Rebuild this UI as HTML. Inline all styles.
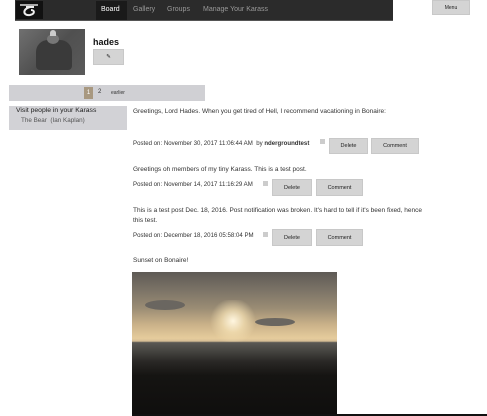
<!DOCTYPE html>
<html><head><style>
body{margin:0;width:487px;height:416px;overflow:hidden;background:#fff;font-family:"Liberation Sans",sans-serif;font-size:6.5px;color:#333;position:relative}
.a{position:absolute;white-space:nowrap}
.btn{position:absolute;background:#d4d4d4;border:1px solid #c8c8c8;text-align:center;font-size:5.5px;color:#222;box-sizing:border-box}
</style></head><body>
<div class="a" style="left:15px;top:0;width:378px;height:20px;background:#2b2b2b;border-bottom:1px solid #555"></div>
<div class="a" style="left:16px;top:1px;width:27px;height:18px;background:#111"></div>
<svg class="a" style="left:18px;top:2px" width="24" height="16"><path d="M2 3 L20 3" stroke="#ddd" stroke-width="1.5"/><path d="M8 5 L16 5 M12 5 C4 7 5 14 12 13 C17 12 17 8 13 8" stroke="#eee" stroke-width="2" fill="none"/></svg>
<div class="a" style="left:96px;top:1px;width:31px;height:19px;background:#1a1a1a"></div>
<div class="a" style="left:101px;top:6px;color:#fff;font-size:7px">Board</div>
<div class="a" style="left:133px;top:6px;color:#999;font-size:7px">Gallery</div>
<div class="a" style="left:167px;top:6px;color:#999;font-size:7px">Groups</div>
<div class="a" style="left:203px;top:6px;color:#999;font-size:7px">Manage Your Karass</div>
<div class="btn" style="left:432px;top:0;width:38px;height:15px;line-height:14px;font-size:5px">Menu</div>
<div class="a" style="left:19px;top:29px;width:66px;height:46px;background:linear-gradient(135deg,#707070,#505050 50%,#5a5a5a)"></div>
<div class="a" style="left:36px;top:40px;width:36px;height:30px;background:#3a3a3a;border-radius:12px 12px 4px 4px"></div>
<div class="a" style="left:47px;top:34px;width:12px;height:10px;background:#777;border-radius:50%"></div>
<div class="a" style="left:50px;top:30px;width:6px;height:6px;background:#ccc;border-radius:50% 50% 0 0"></div>
<div class="a" style="left:93px;top:37px;font-weight:bold;font-size:9px;color:#111">hades</div>
<div class="btn" style="left:93px;top:49px;width:31px;height:16px;line-height:14px">✎</div>
<div class="a" style="left:9px;top:85px;width:196px;height:16px;background:#d0d0d4"></div>
<div class="a" style="left:84px;top:87px;width:9px;height:12px;background:#a89880;color:#fff;font-size:6px;text-align:center;line-height:12px">1</div>
<div class="a" style="left:98px;top:89px;font-size:6px">2</div>
<div class="a" style="left:111px;top:90px;font-size:5px">earlier</div>
<div class="a" style="left:9px;top:106px;width:118px;height:24px;background:#d2d2d6"></div>
<div class="a" style="left:16px;top:107px;font-size:6.8px;color:#222">Visit people in your Karass</div>
<div class="a" style="left:21px;top:117px;font-size:6.3px;color:#555">The Bear &nbsp;(Ian Kaplan)</div>
<div class="a" style="left:133px;top:108px">Greetings, Lord Hades. When you get tired of Hell, I recommend vacationing in Bonaire:</div>
<div class="a" style="left:133px;top:140px;font-size:6.1px">Posted on: November 30, 2017 11:06:44 AM &nbsp;by <b>ndergroundtest</b></div>
<div class="a" style="left:320px;top:139px;width:5px;height:5px;background:#ccc"></div>
<div class="btn" style="left:329px;top:138px;width:39px;height:16px;line-height:15px">Delete</div>
<div class="btn" style="left:371px;top:138px;width:48px;height:16px;line-height:15px">Comment</div>
<div class="a" style="left:133px;top:166px">Greetings oh members of my tiny Karass. This is a test post.</div>
<div class="a" style="left:133px;top:181px;font-size:6.1px">Posted on: November 14, 2017 11:16:29 AM</div>
<div class="a" style="left:263px;top:181px;width:5px;height:5px;background:#ccc"></div>
<div class="btn" style="left:272px;top:179px;width:40px;height:17px;line-height:16px">Delete</div>
<div class="btn" style="left:316px;top:179px;width:47px;height:17px;line-height:16px">Comment</div>
<div class="a" style="left:133px;top:206px;width:300px;line-height:10px;white-space:normal">This is a test post Dec. 18, 2016. Post notification was broken. It's hard to tell if it's been fixed, hence this test.</div>
<div class="a" style="left:133px;top:232px;font-size:6.1px">Posted on: December 18, 2016 05:58:04 PM</div>
<div class="a" style="left:263px;top:232px;width:5px;height:5px;background:#ccc"></div>
<div class="btn" style="left:272px;top:229px;width:40px;height:17px;line-height:16px">Delete</div>
<div class="btn" style="left:316px;top:229px;width:47px;height:17px;line-height:16px">Comment</div>
<div class="a" style="left:133px;top:257px">Sunset on Bonaire!</div>
<div class="a" style="left:132px;top:272px;width:205px;height:144px;background:linear-gradient(180deg,#5e5a55 0%,#7a7266 12%,#9a8c74 25%,#c8b088 36%,#e6cc9c 46%,#d6be96 48%,#5a5854 49%,#454440 55%,#2a2826 62%,#151412 72%,#0f0e0d 100%)"></div>
<div class="a" style="left:145px;top:300px;width:40px;height:10px;background:#6a6660;border-radius:50%"></div>
<div class="a" style="left:255px;top:318px;width:40px;height:8px;background:#6a6660;border-radius:50%"></div>
<div class="a" style="left:208px;top:300px;width:50px;height:42px;background:radial-gradient(circle,#fff6e0 0%,rgba(245,225,180,.7) 35%,rgba(0,0,0,0) 70%)"></div>
<div class="a" style="left:132px;top:414px;width:355px;height:2px;background:#111"></div>
</body></html>
